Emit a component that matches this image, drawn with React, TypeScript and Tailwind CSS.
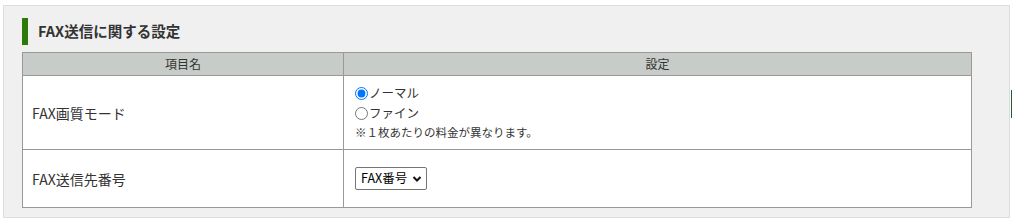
import React from "react";

export default function App() {
  return (
    <div
      className="relative w-[1012px] h-[218px] bg-white pt-[5px] pl-[3px]"
      style={{ fontFamily: '"Noto Sans CJK JP", "Noto Sans", sans-serif' }}
    >
      <div className="w-[1007px] h-[213px] bg-[#eff0ef] border border-[#dcdddc] pl-[18px] pt-[12px]">
        <div className="flex items-center h-[27px] border-l-[6px] border-[#2b7a0b] pl-[10px]">
          <span className="text-[14.5px] font-bold text-[#333] leading-none">FAX送信に関する設定</span>
        </div>
        <table className="mt-[7px] w-[950px] border-collapse text-[14px] text-[#333] bg-white">
          <tbody>
            <tr className="h-[23px] bg-[#c8ccc8]">
              <th className="w-[321px] border border-[#999] font-normal text-[12px] leading-none">項目名</th>
              <th className="border border-[#999] font-normal text-[12px] leading-none">設定</th>
            </tr>
            <tr className="h-[74px]">
              <td className="border border-[#999] pl-[9px] pt-[1px]">FAX画質モード</td>
              <td className="border border-[#999] pl-[11px] align-top">
                <div className="pt-[7px] flex flex-col leading-[20px] text-[12.5px]">
                  <label className="flex items-center">
                    <input type="radio" name="q" defaultChecked className="m-0 w-[13px] h-[13px] mr-[1px] accent-[#0075ff]" />
                    <span>ノーマル</span>
                  </label>
                  <label className="flex items-center">
                    <input type="radio" name="q" className="m-0 w-[13px] h-[13px] mr-[1px]" />
                    <span>ファイン</span>
                  </label>
                  <span className="text-[11.5px] leading-[18px]">※１枚あたりの料金が異なります。</span>
                </div>
              </td>
            </tr>
            <tr className="h-[58px]">
              <td className="border border-[#999] pl-[9px] pt-[2px]">FAX送信先番号</td>
              <td className="border border-[#999] pl-[11px]">
                <div className="flex items-center h-[23px] w-[72px] border border-[#767676] rounded-[2px] bg-white pl-[5px] pr-[4px] justify-between">
                  <span className="text-[12.5px] leading-none text-black">FAX番号</span>
                  <svg width="10" height="8" viewBox="0 0 10 8">
                    <path d="M1.5 2 L5 5.5 L8.5 2" fill="none" stroke="#111" strokeWidth="2" />
                  </svg>
                </div>
              </td>
            </tr>
          </tbody>
        </table>
      </div>
      <div className="absolute left-[1011px] top-[90px] w-[1px] h-[28px] bg-[#1f5f3a]" />
    </div>
  );
}
